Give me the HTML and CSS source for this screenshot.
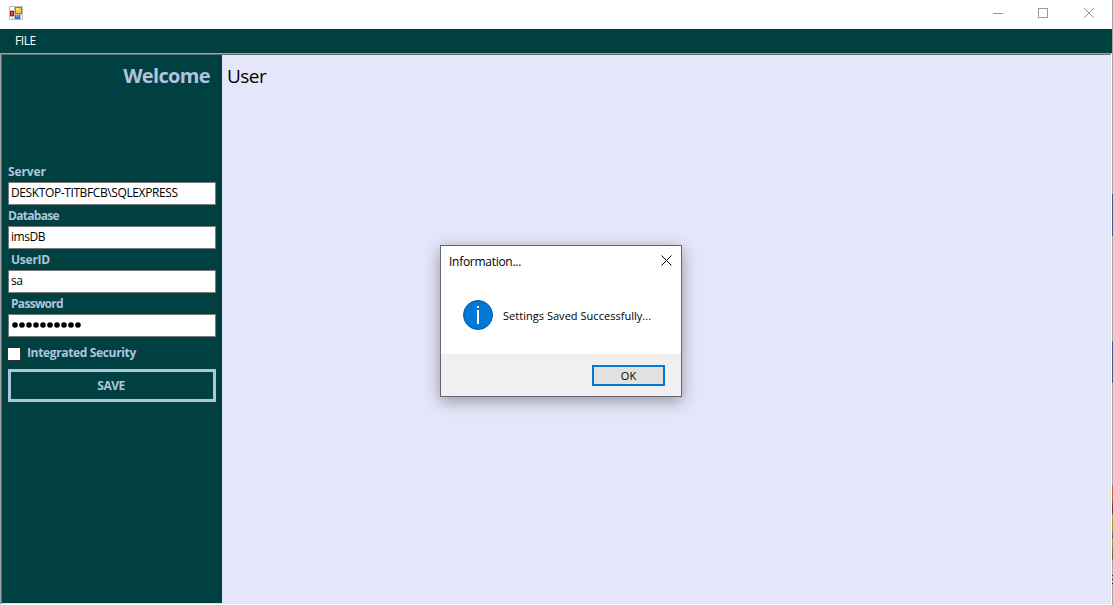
FILE: index.html
```html
<!DOCTYPE html>
<html lang="en">
<head>
<meta charset="utf-8">
<title>Settings</title>
<link rel="stylesheet" href="styles.css">
</head>
<body>
<div class="screen">
  <div class="window">
    <header class="titlebar">
      <svg class="app-icon" width="14" height="14" shape-rendering="crispEdges">
        <rect width="14" height="14" fill="#bdbdbd"/>
        <path d="M1 1h4v3H1zM1 11h2v2H1zM4 11h1v2H4zM12 9h1v4h-1z" fill="#fff"/>
        <rect x="1" y="5" width="4" height="5" fill="#a5170d"/>
        <rect x="2" y="6" width="2" height="3" fill="#e8493a"/>
        <rect x="6" y="1" width="7" height="7" fill="#b07d08"/>
        <rect x="7" y="2" width="5" height="5" fill="#ffc928"/>
        <rect x="7" y="2" width="3" height="2" fill="#ffe486"/>
        <rect x="6" y="9" width="5" height="4" fill="#3869c5"/>
        <rect x="7" y="9" width="3" height="2" fill="#6f9bea"/>
      </svg>
      <svg class="controls" width="103" height="12" fill="none" stroke="#999">
        <path d="M0 6.500h10M45.500 1.500h9v9h-9z" shape-rendering="crispEdges"/>
        <path d="M91 1l10 10M101 1l-10 10"/>
      </svg>
    </header>
    <nav class="menu"><span class="menu-item">FILE</span></nav>
    <main class="client">
      <aside class="sidebar">
        <h1 class="welcome"><span>Welcome</span></h1>
        <form class="settings">
          <label class="label label-server">Server</label>
          <div class="field"><span class="value-server">DESKTOP-TITBFCB\SQLEXPRESS</span></div>
          <label class="label label-database">Database</label>
          <div class="field"><span class="value-database">imsDB</span></div>
          <label class="label label-user indented">UserID</label>
          <div class="field"><span class="value-user">sa</span></div>
          <label class="label label-password indented">Password</label>
          <div class="field"><svg class="dots" width="70" height="6"><path d="M3 3h63.100" stroke="#000" stroke-width="5.600" stroke-linecap="round" stroke-dasharray="0 7"/></svg></div>
          <div class="check"><span class="box"></span><span class="check-text">Integrated Security</span></div>
          <div class="save"><span>SAVE</span></div>
        </form>
      </aside>
      <section class="content"><span class="user">User</span></section>
    </main>
  </div>
  <div class="edge"></div>
</div>
<div class="dialog">
  <div class="dialog-title">
    <span class="dialog-name">Information...</span>
    <svg width="11" height="11" stroke="#000" stroke-width="1"><path d="M.5.5l10 10M10.500.5l-10 10"/></svg>
  </div>
  <div class="dialog-body">
    <svg width="30" height="30"><circle cx="15" cy="15" r="14.500" fill="#0078d7" stroke="#075797"/><path d="M14 6h2v2h-2zM14 10h2v14h-2z" fill="#fff"/></svg>
    <span class="message">Settings Saved Successfully...</span>
  </div>
  <div class="dialog-footer"><div class="ok"><span>OK</span></div></div>
</div>
</body>
</html>
```
FILE: styles.css
```css
* { box-sizing: border-box; }
body { margin: 0; width: 1113px; height: 605px; overflow: hidden; background: #fff; font: 12px/16px "Open Sans", "Noto Sans", sans-serif; color: #000; }
span, label { white-space: nowrap; }
svg { display: block; flex: none; }
.screen { display: flex; height: 605px; }
.window { width: 1112px; display: flex; flex-direction: column; }
.titlebar { height: 29px; display: flex; justify-content: space-between; padding: 6px 16px 0 9px; }
.controls { margin-top: 1px; }
.menu { height: 24px; background: #004040; color: #fff; padding: 4px 15px; }
.menu-item { letter-spacing: -.4px; }
.client { height: 552px; display: flex; border: 1px solid; border-color: #a0a0a0 #fff #fff #a0a0a0; position: relative; }
.client::after { content: ""; position: absolute; inset: 0; border: 1px solid; border-color: #696969 #e3e3e3 #e3e3e3 #696969; }
.sidebar { width: 221px; background: #004040; color: #b0c4de; padding: 9px 6px 0 7px; font-weight: 700; }
.welcome { margin: 0; height: 100px; padding-right: 6px; text-align: right; font-size: 20px; line-height: 26px; font-weight: 700; letter-spacing: -.65px; }
.settings { display: flex; flex-direction: column; }
.label { height: 19px; line-height: 18px; letter-spacing: -.45px; }
.label-server { letter-spacing: -.1px; }
.label-database { letter-spacing: -.7px; }
.label-user { letter-spacing: -.25px; }
.label-password { letter-spacing: -.7px; }
.indented { padding-left: 3px; }
.field { height: 23px; margin-bottom: 2px; border: 1px solid #7a7a7a; background: #fff; color: #000; font-weight: 400; padding: 2px; line-height: 16px; }
.value-server { letter-spacing: -.39px; }
.value-database, .value-user { letter-spacing: -.45px; }
.dots { margin: 5px 0 0 1px; }
.check { height: 30px; display: flex; align-items: center; gap: 7px; padding-bottom: 1px; }
.check-text { letter-spacing: -.35px; padding-bottom: 2px; }
.box { width: 12px; height: 12px; background: #fff; outline: 1px solid #333; outline-offset: -.5px; }
.save { height: 33px; border: 3px solid #b0c4de; display: flex; justify-content: center; align-items: center; letter-spacing: -.5px; padding-right: 2px; }
.content { flex: 1; background: #e6e6fa; padding: 9px 5px; }
.user { font-size: 19px; line-height: 27px; letter-spacing: -.55px; }
.edge { width: 1px; background: linear-gradient(#a7a7a7 0 194px, #345c96 194px 236px, #a7a7a7 236px 341px, #345c96 341px 383px, #a7a7a7 383px 485px, #b26a45 485px 500px, #56362e 508px, #43446b 513px, #a0a04f 515px, #a98b3a 530px, #3c5a6a 537px, #ad9c42 540px, #3f6740 559px, #a7a7a7 560px 575px, #222 575px 576px, #a7a7a7 576px 579px, #222 579px 580px, #a7a7a7 580px 583px, #222 583px 584px, #a7a7a7 584px); }
.dialog { position: absolute; left: 440px; top: 245px; width: 242px; height: 152px; background: #fff; border: 1px solid #65656c; box-shadow: 0 4px 15px rgba(0,0,0,.36); display: flex; flex-direction: column; }
.dialog-title { height: 30px; display: flex; justify-content: space-between; padding: 7px 9px 0 8px; }
.dialog-title svg { margin-top: 2px; }
.dialog-name { letter-spacing: -.28px; padding-top: 1px; }
.dialog-body { height: 78px; display: flex; gap: 10px; padding: 24px 0 0 22px; }
.message { font-size: 11px; padding-top: 8px; letter-spacing: .03px; }
.dialog-footer { flex: 1; background: #f0f0f0; display: flex; justify-content: flex-end; padding: 11px 16px 0; }
.ok { width: 73px; height: 21px; border: 2px solid #0078d7; background: #e1e1e1; display: flex; justify-content: center; align-items: center; font-size: 11px; padding-top: 1px; }
```
